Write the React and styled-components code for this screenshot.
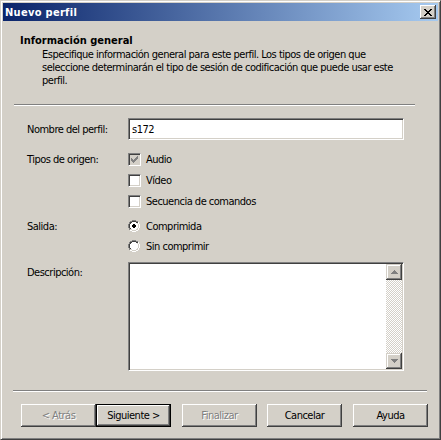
import React from 'react'
import styled, { createGlobalStyle } from 'styled-components'

const GlobalStyle = createGlobalStyle`
  html, body {
    margin: 0;
    padding: 0;
    background: #d4d0c8;
  }
  * {
    box-sizing: border-box;
  }
`

const Window = styled.div`
  width: 441px;
  height: 440px;
  padding: 2px;
  background: #d4d0c8;
  border: 1px solid;
  border-color: #d4d0c8 #404040 #404040 #d4d0c8;
  box-shadow: inset 1px 1px #ffffff, inset -1px -1px #808080;
  font-family: "DejaVu Sans Condensed", "DejaVu Sans", sans-serif;
  font-stretch: condensed;
  font-size: 11px;
  line-height: 13px;
  letter-spacing: -0.5px;
  color: #000;
  display: flex;
  flex-direction: column;
`

const TitleBar = styled.div`
  height: 18px;
  display: flex;
  align-items: center;
  justify-content: space-between;
  padding: 0 2px 0 2px;
  background: linear-gradient(to right, #0a246a, #a6caf0);
  color: #fff;
  font-weight: bold;
  letter-spacing: 0.3px;
`

const CloseButton = styled.div`
  width: 16px;
  height: 14px;
  background: #d4d0c8;
  box-shadow: inset -1px -1px #404040, inset 1px 1px #ffffff, inset -2px -2px #808080;
  display: flex;
  align-items: center;
  justify-content: center;
`

const Header = styled.div`
  padding: 13px 0 0 17px;
`

const HeaderTitle = styled.div`
  font-weight: bold;
  letter-spacing: 0;
`

const HeaderText = styled.div`
  margin: 1px 0 0 22px;
`

const Separator = styled.div`
  height: 2px;
  margin: ${p => p.$top}px 0 0 ${p => p.$left}px;
  width: ${p => p.$width}px;
  border-top: 1px solid #808080;
  border-bottom: 1px solid #ffffff;
`

const Form = styled.div`
  padding-left: 24px;
  display: flex;
  flex-direction: column;
`

const Row = styled.div`
  display: flex;
  align-items: ${p => (p.$top ? 'flex-start' : 'center')};
  margin-top: ${p => p.$mt || 0}px;
  min-height: ${p => p.$h || 0}px;
`

const Label = styled.div`
  width: 101px;
  flex-shrink: 0;
  padding-top: ${p => p.$pt || 0}px;
`

const Sunken = styled.div`
  background: #fff;
  border: 1px solid;
  border-color: #808080 #ffffff #ffffff #808080;
  box-shadow: inset 1px 1px #404040, inset -1px -1px #d4d0c8;
`

const TextInput = styled(Sunken)`
  width: 276px;
  height: 22px;
  padding: 4px 0 0 3px;
`

const Options = styled.div`
  display: flex;
  flex-direction: column;
`

const Option = styled.div`
  height: ${p => p.$h}px;
  display: flex;
  align-items: center;
  gap: ${p => p.$gap}px;
`

const CheckBox = styled(Sunken)`
  width: 13px;
  height: 13px;
  background: ${p => (p.$disabled ? '#d4d0c8' : '#fff')};
  display: flex;
  align-items: center;
  justify-content: center;
`

const TextArea = styled(Sunken)`
  width: 276px;
  height: 109px;
  padding: 1px;
  display: flex;
  justify-content: flex-end;
`

const ScrollBar = styled.div`
  width: 16px;
  display: flex;
  flex-direction: column;
  justify-content: space-between;
  background: repeating-conic-gradient(#d4d0c8 0% 25%, #ffffff 0% 50%) 0 0 / 2px 2px;
`

const ArrowButton = styled.div`
  width: 16px;
  height: 16px;
  background: #d4d0c8;
  box-shadow: inset -1px -1px #404040, inset 1px 1px #d4d0c8, inset -2px -2px #808080, inset 2px 2px #ffffff;
  display: flex;
  align-items: center;
  justify-content: center;
`

const ButtonRow = styled.div`
  display: flex;
  margin-top: 12px;
  padding-left: 18px;
`

const Button = styled.div`
  width: 75px;
  height: 23px;
  margin-left: ${p => p.$ml || 0}px;
  display: flex;
  align-items: center;
  justify-content: center;
  background: #d4d0c8;
  border: ${p => (p.$default ? '1px solid #000' : 'none')};
  box-shadow: inset -1px -1px #404040, inset 1px 1px #ffffff, inset -2px -2px #808080;
  color: ${p => (p.$disabled ? '#808080' : '#000')};
  text-shadow: ${p => (p.$disabled ? '1px 1px #ffffff' : 'none')};
`

const Check = ({ color }) => (
  <svg width="7" height="7" viewBox="0 0 7 7" shapeRendering="crispEdges">
    <path
      d="M0 2h1v3h-1zM1 3h1v3h-1zM2 4h1v3h-1zM3 3h1v3h-1zM4 2h1v3h-1zM5 1h1v3h-1zM6 0h1v3h-1z"
      fill={color}
    />
  </svg>
)

const Radio = ({ checked }) => (
  <svg width="12" height="12" viewBox="0 0 12 12" shapeRendering="crispEdges">
    <path d="M4 0h4v1h-4zM2 1h2v1h-2zM8 1h2v1h-2zM1 2h1v2h-1zM0 4h1v4h-1zM1 8h1v2h-1z" fill="#808080" />
    <path d="M4 1h4v1h-4zM2 2h2v1h-2zM8 2h2v1h-2zM2 3h1v1h-1zM1 4h1v4h-1zM2 8h1v1h-1z" fill="#404040" />
    <path d="M10 2h1v2h-1zM11 4h1v4h-1zM10 8h1v2h-1zM8 10h2v1h-2zM2 10h2v1h-2zM4 11h4v1h-4z" fill="#ffffff" />
    <path d="M9 3h1v1h-1zM10 4h1v4h-1zM9 8h1v1h-1zM8 9h1v1h-1zM3 9h1v1h-1zM4 10h4v1h-4z" fill="#d4d0c8" />
    <path d="M4 2h4v1h-4zM3 3h6v1h-6zM2 4h8v4h-8zM3 8h6v1h-6zM4 9h4v1h-4z" fill="#ffffff" />
    {checked && <path d="M5 4h2v1h-2zM4 5h4v2h-4zM5 7h2v1h-2z" fill="#000" />}
  </svg>
)

const Arrow = ({ down }) => (
  <svg width="7" height="4" viewBox="0 0 7 4" shapeRendering="crispEdges">
    {down ? (
      <path d="M0 0h7v1h-7zM1 1h5v1h-5zM2 2h3v1h-3zM3 3h1v1h-1z" fill="#808080" />
    ) : (
      <path d="M3 0h1v1h-1zM2 1h3v1h-3zM1 2h5v1h-5zM0 3h7v1h-7z" fill="#808080" />
    )}
  </svg>
)

const CloseGlyph = () => (
  <svg width="8" height="7" viewBox="0 0 8 7" shapeRendering="crispEdges">
    <path
      d="M0 0h2v1h-2zM6 0h2v1h-2zM1 1h2v1h-2zM5 1h2v1h-2zM2 2h4v1h-4zM3 3h2v1h-2zM2 4h4v1h-4zM1 5h2v1h-2zM5 5h2v1h-2zM0 6h2v1h-2zM6 6h2v1h-2z"
      fill="#000"
    />
  </svg>
)

export default function App() {
  return (
    <>
      <GlobalStyle />
      <Window>
        <TitleBar>
          <span>Nuevo perfil</span>
          <CloseButton>
            <CloseGlyph />
          </CloseButton>
        </TitleBar>
        <Header>
          <HeaderTitle>Información general</HeaderTitle>
          <HeaderText>
            Especifique información general para este perfil. Los tipos de origen que
            <br />
            seleccione determinarán el tipo de sesión de codificación que puede usar este
            <br />
            perfil.
          </HeaderText>
        </Header>
        <Separator $top={17} $left={11} $width={401} />
        <Form>
          <Row $mt={12}>
            <Label>Nombre del perfil:</Label>
            <TextInput>s172</TextInput>
          </Row>
          <Row $mt={9} $top>
            <Label $pt={4}>Tipos de origen:</Label>
            <Options>
              <Option $h={21} $gap={5}>
                <CheckBox $disabled>
                  <Check color="#808080" />
                </CheckBox>
                Audio
              </Option>
              <Option $h={21} $gap={5}>
                <CheckBox />
                Vídeo
              </Option>
              <Option $h={21} $gap={5}>
                <CheckBox />
                Secuencia de comandos
              </Option>
            </Options>
          </Row>
          <Row $mt={4} $top>
            <Label $pt={4}>Salida:</Label>
            <Options>
              <Option $h={20} $gap={6}>
                <Radio checked />
                Comprimida
              </Option>
              <Option $h={20} $gap={6}>
                <Radio />
                Sin comprimir
              </Option>
            </Options>
          </Row>
          <Row $mt={6} $top>
            <Label $pt={4}>Descripción:</Label>
            <TextArea>
              <ScrollBar>
                <ArrowButton>
                  <Arrow />
                </ArrowButton>
                <ArrowButton>
                  <Arrow down />
                </ArrowButton>
              </ScrollBar>
            </TextArea>
          </Row>
        </Form>
        <Separator $top={19} $left={10} $width={414} />
        <ButtonRow>
          <Button $disabled>&lt; Atrás</Button>
          <Button $default>Siguiente &gt;</Button>
          <Button $disabled $ml={11}>Finalizar</Button>
          <Button $ml={10}>Cancelar</Button>
          <Button $ml={11}>Ayuda</Button>
        </ButtonRow>
      </Window>
    </>
  )
}
